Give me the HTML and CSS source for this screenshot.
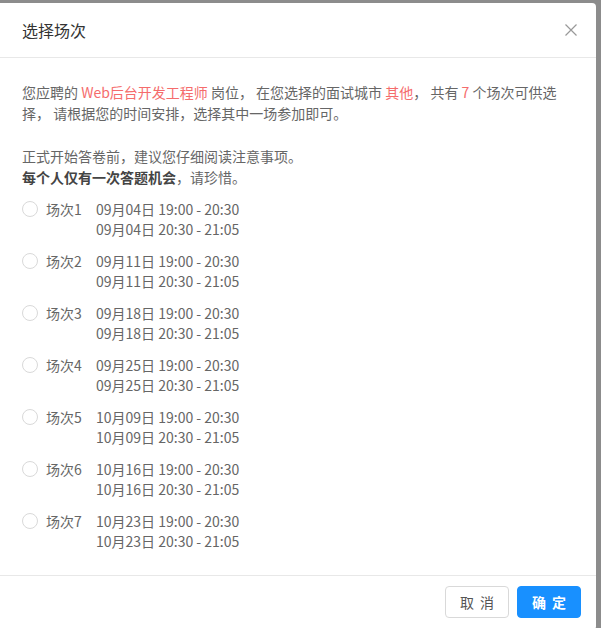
FILE: index.html
```html
<!DOCTYPE html>
<html lang="zh-CN">
<head>
<meta charset="utf-8">
<title>选择场次</title>
<link rel="stylesheet" href="styles.css">
</head>
<body>
<div class="modal">
  <div class="modal-header">
    <div class="modal-title">选择场次</div>
    <button class="modal-close" aria-label="关闭">
      <svg width="12" height="12" viewBox="0 0 12 12"><path d="M0.5 0.5 L11.5 11.5 M11.5 0.5 L0.5 11.5" stroke="#999" stroke-width="1.2" fill="none"/></svg>
    </button>
  </div>
  <div class="modal-body">
    <p class="intro">您应聘的 <span class="hl">Web后台开发工程师</span> 岗位， 在您选择的面试城市 <span class="hl">其他</span>， 共有 <span class="hl">7</span> 个场次可供选择， 请根据您的时间安排，选择其中一场参加即可。</p>
    <p class="notice">正式开始答卷前，建议您仔细阅读注意事项。<br><b>每个人仅有一次答题机会</b>，请珍惜。</p>
    <ul class="sessions">
      <li class="session"><span class="radio"></span><span class="name">场次1</span><span class="times"><span>09月04日 19:00 - 20:30</span><span>09月04日 20:30 - 21:05</span></span></li>
      <li class="session"><span class="radio"></span><span class="name">场次2</span><span class="times"><span>09月11日 19:00 - 20:30</span><span>09月11日 20:30 - 21:05</span></span></li>
      <li class="session"><span class="radio"></span><span class="name">场次3</span><span class="times"><span>09月18日 19:00 - 20:30</span><span>09月18日 20:30 - 21:05</span></span></li>
      <li class="session"><span class="radio"></span><span class="name">场次4</span><span class="times"><span>09月25日 19:00 - 20:30</span><span>09月25日 20:30 - 21:05</span></span></li>
      <li class="session"><span class="radio"></span><span class="name">场次5</span><span class="times"><span>10月09日 19:00 - 20:30</span><span>10月09日 20:30 - 21:05</span></span></li>
      <li class="session"><span class="radio"></span><span class="name">场次6</span><span class="times"><span>10月16日 19:00 - 20:30</span><span>10月16日 20:30 - 21:05</span></span></li>
      <li class="session"><span class="radio"></span><span class="name">场次7</span><span class="times"><span>10月23日 19:00 - 20:30</span><span>10月23日 20:30 - 21:05</span></span></li>
    </ul>
  </div>
  <div class="modal-footer">
    <button class="btn btn-default">取消</button>
    <button class="btn btn-primary">确定</button>
  </div>
</div>
</body>
</html>
```
FILE: styles.css
```css
html, body {
  margin: 0;
  padding: 0;
  height: 100%;
  overflow: hidden;
}
body {
  background: #8c8c8c;
  padding-top: 3px;
  font-family: "Noto Sans CJK SC", "Noto Sans", sans-serif;
  font-size: 14px;
  color: #666;
  box-sizing: border-box;
}
.modal {
  width: 596px;
  background: #fff;
  border-radius: 0 4px 4px 0;
}
.modal-header {
  display: flex;
  align-items: center;
  justify-content: space-between;
  padding: 16px 22px;
  border-bottom: 1px solid #e8e8e8;
}
.modal-title {
  font-size: 16px;
  line-height: 22px;
  color: #333;
}
.modal-close {
  border: 0;
  background: none;
  padding: 0;
  margin-right: -3px;
  width: 12px;
  height: 12px;
  display: flex;
  cursor: pointer;
}
.modal-close svg {
  width: 12px;
  height: 12px;
}
.modal-body {
  padding: 24px 22px 24px;
  line-height: 21px;
}
.modal-body p {
  margin: 0;
}
.intro {
  margin-bottom: 22px !important;
}
.hl {
  color: #f56c6c;
}
.notice b {
  color: #444;
  font-weight: 700;
}
.sessions {
  list-style: none;
  margin: 11px 0 0;
  padding: 0;
  display: flex;
  flex-direction: column;
  gap: 12px;
}
.session {
  display: flex;
  align-items: flex-start;
  line-height: 20px;
}
.radio {
  width: 14px;
  height: 14px;
  border: 1px solid #d9d9d9;
  border-radius: 50%;
  margin-top: 2px;
  margin-right: 8px;
  flex: none;
}
.name {
  width: 50px;
  flex: none;
}
.times {
  display: flex;
  flex-direction: column;
}
.modal-footer {
  display: flex;
  justify-content: flex-end;
  gap: 8px;
  padding: 10px 15px 12px;
  border-top: 1px solid #e8e8e8;
}
.btn {
  width: 64px;
  height: 32px;
  border-radius: 4px;
  font-family: "Noto Sans CJK SC", sans-serif;
  font-size: 14px;
  letter-spacing: 6px;
  text-indent: 6px;
  padding: 0;
  cursor: pointer;
}
.btn-default {
  background: #fff;
  border: 1px solid #d9d9d9;
  color: #555;
}
.btn-primary {
  background: #1890ff;
  border: 1px solid #1890ff;
  color: #fff;
  font-weight: 700;
}
```
